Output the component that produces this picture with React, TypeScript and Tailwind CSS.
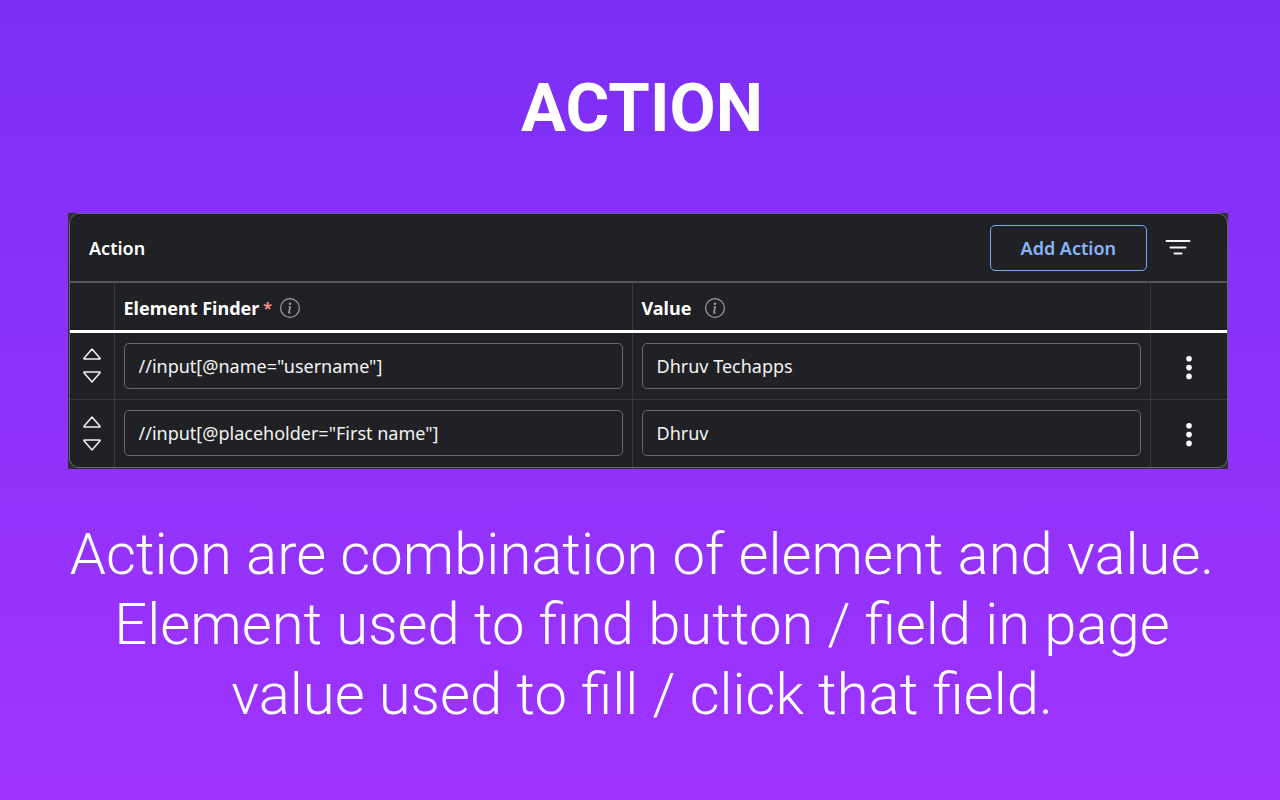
import React, { useState } from 'react';

interface ActionRow {
  id: number;
  elementFinder: string;
  value: string;
}

const initialActions: ActionRow[] = [
  { id: 1, elementFinder: '//input[@name="username"]', value: 'Dhruv Techapps' },
  { id: 2, elementFinder: '//input[@placeholder="First name"]', value: 'Dhruv' },
];

const InfoIcon = () => (
  <svg className="h-5 w-5 shrink-0" viewBox="0 0 16 16" fill="#9a9da1" aria-hidden="true">
    <path d="M8 15A7 7 0 1 1 8 1a7 7 0 0 1 0 14m0 1A8 8 0 1 0 8 0a8 8 0 0 0 0 16" />
    <path d="m8.93 6.588-2.29.287-.082.38.45.083c.294.07.352.176.288.469l-.738 3.468c-.194.897.105 1.319.808 1.319.545 0 1.178-.252 1.465-.598l.088-.416c-.2.176-.492.246-.686.246-.275 0-.375-.193-.304-.533zM9 4.5a1 1 0 1 1-2 0 1 1 0 0 1 2 0" />
  </svg>
);

const FilterIcon = () => (
  <svg className="h-4 w-[26px]" viewBox="0 0 26 16" stroke="#f4f4f4" strokeWidth="2" strokeLinecap="round" aria-hidden="true">
    <path d="M1.5 1h23M5.5 7.5h15M9.5 13.5h7" />
  </svg>
);

const DotsIcon = () => (
  <svg className="h-6 w-6" viewBox="0 0 24 24" fill="#fff" aria-hidden="true">
    <circle cx="12" cy="2.8" r="2.8" />
    <circle cx="12" cy="11.6" r="2.8" />
    <circle cx="12" cy="20.4" r="2.8" />
  </svg>
);

const CaretIcon: React.FC<{ down?: boolean }> = ({ down }) => (
  <svg className={`h-3 w-5 ${down ? 'rotate-180' : ''}`} viewBox="0 0 20 12" fill="none" stroke="#f1f1f1" strokeWidth="1.5" strokeLinejoin="round" aria-hidden="true">
    <path d="M10 1 18 10.2Q18.4 11 17.4 11H2.6Q1.6 11 2 10.2Z" />
  </svg>
);

interface TextFieldProps {
  label: string;
  value: string;
  onChange: (value: string) => void;
}

const TextField: React.FC<TextFieldProps> = ({ label, value, onChange }) => (
  <input
    type="text"
    aria-label={label}
    value={value}
    onChange={e => onChange(e.target.value)}
    className="block h-[46px] w-full rounded-[5px] border border-[#68696c] bg-transparent px-3.5 text-lg text-[#f3f3f3] outline-none"
  />
);

const App: React.FC = () => {
  const [actions, setActions] = useState<ActionRow[]>(initialActions);

  const update = (id: number, field: 'elementFinder' | 'value', value: string) => {
    setActions(actions.map(a => (a.id === id ? { ...a, [field]: value } : a)));
  };

  const addAction = () => {
    setActions([...actions, { id: actions.length + 1, elementFinder: '', value: '' }]);
  };

  const move = (index: number, step: number) => {
    const target = index + step;
    if (target < 0 || target >= actions.length) return;
    const next = [...actions];
    [next[index], next[target]] = [next[target], next[index]];
    setActions(next);
  };

  return (
    <main className="min-h-screen bg-linear-to-b from-[#7b2ff5] to-[#a033ff] pt-[68px] pr-[52px] pb-10 pl-[68px] font-['Roboto',sans-serif] text-white">
      <h1 className="-ml-3 text-center text-[67px] leading-20 font-bold">ACTION</h1>

      <section className="mt-[65px] bg-[#2f2d36] pb-px pl-px font-['Noto_Sans','Open_Sans',sans-serif] text-lg">
        <div className="overflow-hidden rounded-[10px] border border-[#66676b] bg-[#202124]">
          <div className="flex h-[67px] items-center justify-between pr-9 pl-[19px]">
            <h2 className="font-semibold">Action</h2>
            <div className="flex items-center gap-[18px]">
              <button onClick={addAction} className="h-[46px] rounded-[5px] border border-[#7ba7ee] px-[30px] font-semibold text-[#8ab4f8]">
                Add Action
              </button>
              <button aria-label="Filter columns">
                <FilterIcon />
              </button>
            </div>
          </div>

          <table className="w-full table-fixed border-collapse border-t-2 border-[#55565a]">
            <thead>
              <tr className="h-[49px] border-b-3 border-white text-left">
                <th className="w-11" aria-label="Order" />
                <th className="border-x border-[#37383c] px-[9px] pt-1">
                  <div className="flex items-center">
                    <span>Element Finder</span>
                    <span className="mr-2 ml-1 text-base text-[#f28b82]">*</span>
                    <InfoIcon />
                  </div>
                </th>
                <th className="border-x border-[#37383c] px-[9px] pt-1">
                  <div className="flex items-center gap-3.5">
                    <span>Value</span>
                    <InfoIcon />
                  </div>
                </th>
                <th className="w-[77px]" aria-label="Options" />
              </tr>
            </thead>
            <tbody>
              {actions.map((action, index) => (
                <tr key={action.id} className="h-[68px] border-b border-[#37383c] last:border-b-0">
                  <td>
                    <div className="flex flex-col items-center gap-[11px]">
                      <button aria-label="Move up" onClick={() => move(index, -1)}>
                        <CaretIcon />
                      </button>
                      <button aria-label="Move down" onClick={() => move(index, 1)}>
                        <CaretIcon down />
                      </button>
                    </div>
                  </td>
                  <td className="border-x border-[#37383c] px-[9px]">
                    <TextField label="Element Finder" value={action.elementFinder} onChange={v => update(action.id, 'elementFinder', v)} />
                  </td>
                  <td className="border-x border-[#37383c] px-[9px]">
                    <TextField label="Value" value={action.value} onChange={v => update(action.id, 'value', v)} />
                  </td>
                  <td className="text-center">
                    <button aria-label="More options" className="align-middle">
                      <DotsIcon />
                    </button>
                  </td>
                </tr>
              ))}
            </tbody>
          </table>
        </div>
      </section>

      <p className="-mr-3 -ml-6 mt-[50px] text-center text-[58px] leading-[70px] font-light">
        Action are combination of element and value.
        <br />
        Element used to find button / field in page
        <br />
        value used to fill / click that field.
      </p>
    </main>
  );
};

export default App;
